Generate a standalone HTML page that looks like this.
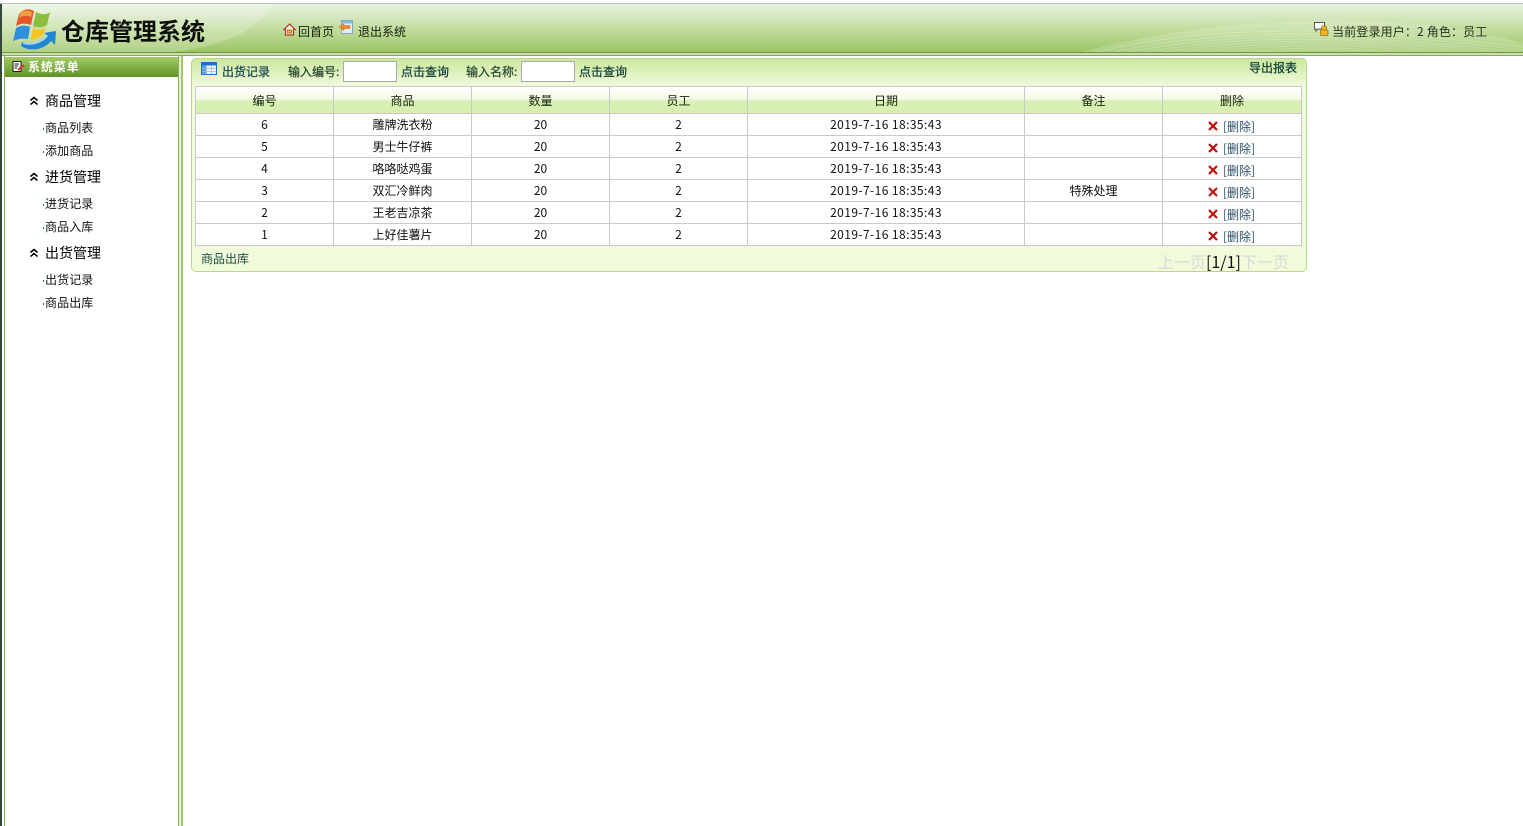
<!DOCTYPE html>
<html lang="zh">
<head>
<meta charset="utf-8">
<title>仓库管理系统</title>
<style>
html,body{margin:0;padding:0;background:#fff;overflow:hidden}
body{width:1523px;height:826px;position:relative;font-family:"Noto Sans CJK SC","Liberation Sans",sans-serif;font-size:12px;color:#111}
.a{position:absolute;white-space:nowrap;line-height:16px}
#hd{position:absolute;left:0;top:3px;width:1523px;height:49px;border-top:1px solid #bbb;box-sizing:border-box;background:linear-gradient(#eaf3df 0,#dbeac8 20%,#bcd994 60%,#9cc566 100%);overflow:hidden}
#hl{position:absolute;left:0;top:52px;width:1523px;height:1px;background:#6e9a35}
#hl2{position:absolute;left:0;top:53px;width:1523px;height:2px;background:#cfdcbc}
#hl3{position:absolute;left:0;top:55px;width:1523px;height:1px;background:#8aa85a}
.c{position:absolute;background:#c9c9c9}
.t{position:absolute;text-align:center;line-height:16px;white-space:nowrap;color:#111}
.d{letter-spacing:.42px}
.th{color:#16220c}
.lnk{color:#0f3f36;-webkit-text-stroke:.25px #0f3f36}
.x{position:absolute;width:10px;height:10px}
.m{font-size:14px;color:#000}
.s{color:#111;letter-spacing:.1px}
.dot{position:absolute;left:43px;width:1px;height:2px;background:#1f6f80}
</style>
</head>
<body>
<div id="hd">
<svg width="1523" height="50" style="position:absolute;left:0;top:0">
<path d="M0 0H272C258 26 225 44 160 49H0Z" fill="#fff" opacity=".22"/>
<path d="M1075 50C1180 20 1300 13 1400 19C1450 22 1490 30 1523 39V50Z" fill="#fff" opacity=".18"/>
<g fill="none" stroke="#fff" stroke-opacity=".22" stroke-width="1">
<path d="M1090 50C1190 24 1320 18 1523 43"/>
<path d="M1105 50C1200 28 1320 21 1523 46"/>
<path d="M1120 50C1210 31 1320 24 1523 49"/>
<path d="M1135 50C1220 34 1320 27 1515 50"/>
<path d="M1150 50C1230 37 1320 30 1495 50"/>
<path d="M1165 50C1240 40 1320 33 1475 50"/>
<path d="M1180 50C1250 43 1320 36 1455 50"/>
<path d="M1195 50C1260 46 1320 39 1435 50"/>
<path d="M1210 50C1270 48 1320 42 1415 50"/>
</g>
</svg>
</div>
<div id="hl"></div><div id="hl2"></div><div id="hl3"></div>
<div style="position:absolute;left:0;top:4px;width:2px;height:822px;background:#33473a"></div>
<div style="position:absolute;left:2px;top:56px;width:2px;height:770px;background:#fff"></div>

<!-- logo -->
<svg style="position:absolute;left:12px;top:5px" width="46" height="46" viewBox="0 0 46 46">
<path d="M7 9C11 4 17 3 22 6L19 20C14 18 9 18 4 21Z" fill="#e8552b"/>
<path d="M8 8C12 5 16 5 20 7L19 12C14 10 10 11 7 13Z" fill="#f0a040"/>
<path d="M24 7C30 10 34 10 38 7L35 20C31 23 26 23 21 21Z" fill="#8cbf3e"/>
<path d="M4 23C9 20 14 20 18 22L16 34C11 33 6 34 1 36Z" fill="#2f8fe0"/>
<path d="M21 23C25 25 29 25 33 23L31 30C27 32 24 34 19 35Z" fill="#f7c320"/>
<path d="M10 37C20 42 31 38 36 31L32 28L44 26L43 40L39 36C32 45 18 47 9 41Z" fill="#1f86d2"/>
<path d="M11 38C20 41 30 37 35 31" stroke="#9fd4f5" stroke-width="1.5" fill="none"/>
</svg>
<div class="a" style="left:61px;top:13px;font-size:24px;line-height:34px;font-weight:700;color:#0b0f08">仓库管理系统</div>

<!-- home icon -->
<svg style="position:absolute;left:283px;top:23px" width="13" height="13" viewBox="0 0 13 13">
<path d="M6.500 1L1 6.500H2.500V12H10.500V6.500H12Z" fill="#f6eedd" stroke="#b5332a" stroke-width="1.200"/>
<rect x="4.500" y="7" width="4" height="3" fill="#f0c030" stroke="#7a5a20" stroke-width=".7"/>
</svg>
<div class="a" style="left:298px;top:24px;color:#141e0c">回首页</div>
<!-- exit icon -->
<svg style="position:absolute;left:339px;top:20px" width="14" height="14" viewBox="0 0 14 14">
<rect x="2.500" y=".5" width="11" height="13" fill="#e4eef2" stroke="#7fa7c0"/>
<rect x="3" y="1" width="10" height="2.500" fill="#7fc0dc"/>
<path d="M0 7L5 3.500V5.500H11V8.500H5V10.500Z" fill="#ef8a2c" stroke="#c9651a" stroke-width=".5"/>
</svg>
<div class="a" style="left:358px;top:24px;color:#141e0c">退出系统</div>

<!-- user icon -->
<svg style="position:absolute;left:1314px;top:22px" width="15" height="14" viewBox="0 0 15 14">
<path d="M.5 .5H10.500V7H4L2 9V7H.5Z" fill="#fff" stroke="#555"/>
<circle cx="10" cy="6" r="2.500" fill="#f7b21c" stroke="#7a5a10" stroke-width=".6"/>
<rect x="6.500" y="8" width="7.500" height="5.500" rx="1" fill="#f7b21c" stroke="#7a5a10" stroke-width=".6"/>
</svg>
<div class="a" style="left:1332px;top:24px;color:#24301a;letter-spacing:.15px">当前登录用户：2 角色：员工</div>

<!-- sidebar -->
<div style="position:absolute;left:4px;top:56px;width:1px;height:770px;background:#8db257"></div>
<div style="position:absolute;left:178px;top:56px;width:1px;height:770px;background:#8db257"></div>
<div style="position:absolute;left:181px;top:56px;width:2px;height:770px;background:#a5c676"></div>
<div style="position:absolute;left:179px;top:56px;width:2px;height:770px;background:#e4efd2"></div>
<div style="position:absolute;left:5px;top:57px;width:173px;height:20px;background:linear-gradient(#a3cb63,#5f9325)"></div>
<svg style="position:absolute;left:12px;top:60px" width="13" height="13" viewBox="0 0 13 13">
<rect x="1" y="1.500" width="8" height="10" fill="#fff" stroke="#222"/>
<path d="M2.500 4H7M2.500 6H6M2.500 8H5" stroke="#222"/>
<path d="M6 10L12 5" stroke="#d33" stroke-width="2"/>
</svg>
<div class="a" style="left:28px;top:59px;font-weight:700;color:#fff;letter-spacing:.9px">系统菜单</div>

<svg style="position:absolute;left:29px;top:96px" width="10" height="10" viewBox="0 0 10 10"><path d="M1.500 4.500L5 1.500L8.500 4.500M1.500 8.500L5 5.500L8.500 8.500" fill="none" stroke="#000" stroke-width="1.500"/></svg>
<div class="a m" style="left:45px;top:93px">商品管理</div>
<div class="dot" style="top:128px"></div><div class="a s" style="left:45px;top:120px">商品列表</div>
<div class="dot" style="top:151px"></div><div class="a s" style="left:45px;top:143px">添加商品</div>
<svg style="position:absolute;left:29px;top:172px" width="10" height="10" viewBox="0 0 10 10"><path d="M1.500 4.500L5 1.500L8.500 4.500M1.500 8.500L5 5.500L8.500 8.500" fill="none" stroke="#000" stroke-width="1.500"/></svg>
<div class="a m" style="left:45px;top:169px">进货管理</div>
<div class="dot" style="top:204px"></div><div class="a s" style="left:45px;top:196px">进货记录</div>
<div class="dot" style="top:227px"></div><div class="a s" style="left:45px;top:219px">商品入库</div>
<svg style="position:absolute;left:29px;top:248px" width="10" height="10" viewBox="0 0 10 10"><path d="M1.500 4.500L5 1.500L8.500 4.500M1.500 8.500L5 5.500L8.500 8.500" fill="none" stroke="#000" stroke-width="1.500"/></svg>
<div class="a m" style="left:45px;top:245px">出货管理</div>
<div class="dot" style="top:280px"></div><div class="a s" style="left:45px;top:272px">出货记录</div>
<div class="dot" style="top:303px"></div><div class="a s" style="left:45px;top:295px">商品出库</div>

<!-- panel -->
<div style="position:absolute;left:191px;top:58px;width:1116px;height:214px;box-sizing:border-box;border:1px solid #bcd68f;border-radius:5px;background:linear-gradient(#cbe79f 0,#f0fbdc 27px,#f0fbdc 100%)"></div>

<svg style="position:absolute;left:201px;top:62px" width="16" height="14" viewBox="0 0 16 14">
<rect x=".5" y=".5" width="15" height="12" fill="#eef3fb" stroke="#1f6fd0"/>
<rect x="1" y="1" width="14" height="2.500" fill="#1f6fd0"/>
<rect x="1" y="3.500" width="4" height="9" fill="#5d9de6"/>
<path d="M5.500 4V12M10.500 4V12M1 6.500H15M1 9.500H15" stroke="#9db8d8" stroke-width=".8"/>
</svg>
<div class="a lnk" style="left:222px;top:64px;color:#1a4a50;-webkit-text-stroke-color:#1a4a50">出货记录</div>
<div class="a lnk" style="left:288px;top:64px;color:#2a4a30;-webkit-text-stroke-color:#2a4a30">输入编号:</div>
<div style="position:absolute;left:343px;top:61px;width:54px;height:21px;box-sizing:border-box;background:#fff;border:1px solid #a9a9a9"></div>
<div class="a lnk" style="left:401px;top:64px">点击查询</div>
<div class="a lnk" style="left:466px;top:64px;color:#2a4a30;-webkit-text-stroke-color:#2a4a30">输入名称:</div>
<div style="position:absolute;left:521px;top:61px;width:54px;height:21px;box-sizing:border-box;background:#fff;border:1px solid #a9a9a9"></div>
<div class="a lnk" style="left:579px;top:64px">点击查询</div>
<div class="a lnk" style="left:1249px;top:60px">导出报表</div>

<!-- table -->
<div style="position:absolute;left:195px;top:86px;width:1107px;height:160px;background:#fff"></div>
<div style="position:absolute;left:195px;top:87px;width:1107px;height:26px;background:linear-gradient(#fff 0,#f4fbe8 12px,#d9f0b4 14px,#d6efb0 100%)"></div>
<div class="c" style="left:195px;top:86px;width:1107px;height:1px"></div>
<div class="c" style="left:195px;top:113px;width:1107px;height:1px"></div>
<div class="c" style="left:195px;top:135px;width:1107px;height:1px"></div>
<div class="c" style="left:195px;top:157px;width:1107px;height:1px"></div>
<div class="c" style="left:195px;top:179px;width:1107px;height:1px"></div>
<div class="c" style="left:195px;top:201px;width:1107px;height:1px"></div>
<div class="c" style="left:195px;top:223px;width:1107px;height:1px"></div>
<div class="c" style="left:195px;top:245px;width:1107px;height:1px"></div>
<div class="c" style="left:195px;top:86px;width:1px;height:160px"></div>
<div class="c" style="left:333px;top:86px;width:1px;height:160px"></div>
<div class="c" style="left:471px;top:86px;width:1px;height:160px"></div>
<div class="c" style="left:609px;top:86px;width:1px;height:160px"></div>
<div class="c" style="left:747px;top:86px;width:1px;height:160px"></div>
<div class="c" style="left:1024px;top:86px;width:1px;height:160px"></div>
<div class="c" style="left:1162px;top:86px;width:1px;height:160px"></div>
<div class="c" style="left:1301px;top:86px;width:1px;height:160px"></div>

<div class="t th" style="left:196px;top:93px;width:137px">编号</div>
<div class="t th" style="left:334px;top:93px;width:137px">商品</div>
<div class="t th" style="left:472px;top:93px;width:137px">数量</div>
<div class="t th" style="left:610px;top:93px;width:137px">员工</div>
<div class="t th" style="left:748px;top:93px;width:276px">日期</div>
<div class="t th" style="left:1025px;top:93px;width:137px">备注</div>
<div class="t th" style="left:1163px;top:93px;width:138px">删除</div>

<div class="t" style="left:196px;top:117px;width:137px">6</div>
<div class="t" style="left:334px;top:117px;width:137px">雕牌洗衣粉</div>
<div class="t" style="left:472px;top:117px;width:137px">20</div>
<div class="t" style="left:610px;top:117px;width:137px">2</div>
<div class="t d" style="left:748px;top:117px;width:276px">2019-7-16 18:35:43</div>

<div class="t" style="left:196px;top:139px;width:137px">5</div>
<div class="t" style="left:334px;top:139px;width:137px">男士牛仔裤</div>
<div class="t" style="left:472px;top:139px;width:137px">20</div>
<div class="t" style="left:610px;top:139px;width:137px">2</div>
<div class="t d" style="left:748px;top:139px;width:276px">2019-7-16 18:35:43</div>

<div class="t" style="left:196px;top:161px;width:137px">4</div>
<div class="t" style="left:334px;top:161px;width:137px">咯咯哒鸡蛋</div>
<div class="t" style="left:472px;top:161px;width:137px">20</div>
<div class="t" style="left:610px;top:161px;width:137px">2</div>
<div class="t d" style="left:748px;top:161px;width:276px">2019-7-16 18:35:43</div>

<div class="t" style="left:196px;top:183px;width:137px">3</div>
<div class="t" style="left:334px;top:183px;width:137px">双汇冷鲜肉</div>
<div class="t" style="left:472px;top:183px;width:137px">20</div>
<div class="t" style="left:610px;top:183px;width:137px">2</div>
<div class="t d" style="left:748px;top:183px;width:276px">2019-7-16 18:35:43</div>
<div class="t" style="left:1025px;top:183px;width:137px">特殊处理</div>

<div class="t" style="left:196px;top:205px;width:137px">2</div>
<div class="t" style="left:334px;top:205px;width:137px">王老吉凉茶</div>
<div class="t" style="left:472px;top:205px;width:137px">20</div>
<div class="t" style="left:610px;top:205px;width:137px">2</div>
<div class="t d" style="left:748px;top:205px;width:276px">2019-7-16 18:35:43</div>

<div class="t" style="left:196px;top:227px;width:137px">1</div>
<div class="t" style="left:334px;top:227px;width:137px">上好佳薯片</div>
<div class="t" style="left:472px;top:227px;width:137px">20</div>
<div class="t" style="left:610px;top:227px;width:137px">2</div>
<div class="t d" style="left:748px;top:227px;width:276px">2019-7-16 18:35:43</div>

<svg class="x" style="left:1208px;top:121px" viewBox="0 0 10 10"><path d="M1 1L9 9M9 1L1 9" stroke="#c00d0d" stroke-width="2.200"/></svg>
<div class="a" style="left:1223px;top:119px;color:#2d5068">[删除]</div>
<svg class="x" style="left:1208px;top:143px" viewBox="0 0 10 10"><path d="M1 1L9 9M9 1L1 9" stroke="#c00d0d" stroke-width="2.200"/></svg>
<div class="a" style="left:1223px;top:141px;color:#2d5068">[删除]</div>
<svg class="x" style="left:1208px;top:165px" viewBox="0 0 10 10"><path d="M1 1L9 9M9 1L1 9" stroke="#c00d0d" stroke-width="2.200"/></svg>
<div class="a" style="left:1223px;top:163px;color:#2d5068">[删除]</div>
<svg class="x" style="left:1208px;top:187px" viewBox="0 0 10 10"><path d="M1 1L9 9M9 1L1 9" stroke="#c00d0d" stroke-width="2.200"/></svg>
<div class="a" style="left:1223px;top:185px;color:#2d5068">[删除]</div>
<svg class="x" style="left:1208px;top:209px" viewBox="0 0 10 10"><path d="M1 1L9 9M9 1L1 9" stroke="#c00d0d" stroke-width="2.200"/></svg>
<div class="a" style="left:1223px;top:207px;color:#2d5068">[删除]</div>
<svg class="x" style="left:1208px;top:231px" viewBox="0 0 10 10"><path d="M1 1L9 9M9 1L1 9" stroke="#c00d0d" stroke-width="2.200"/></svg>
<div class="a" style="left:1223px;top:229px;color:#2d5068">[删除]</div>

<div class="a" style="left:201px;top:251px;color:#1e4a3c">商品出库</div>
<div class="a" style="left:1158px;top:252px;font-size:16px;line-height:18px;color:#d9d9d9">上一页<span style="color:#111">[1/1]</span>下一页</div>
</body>
</html>
